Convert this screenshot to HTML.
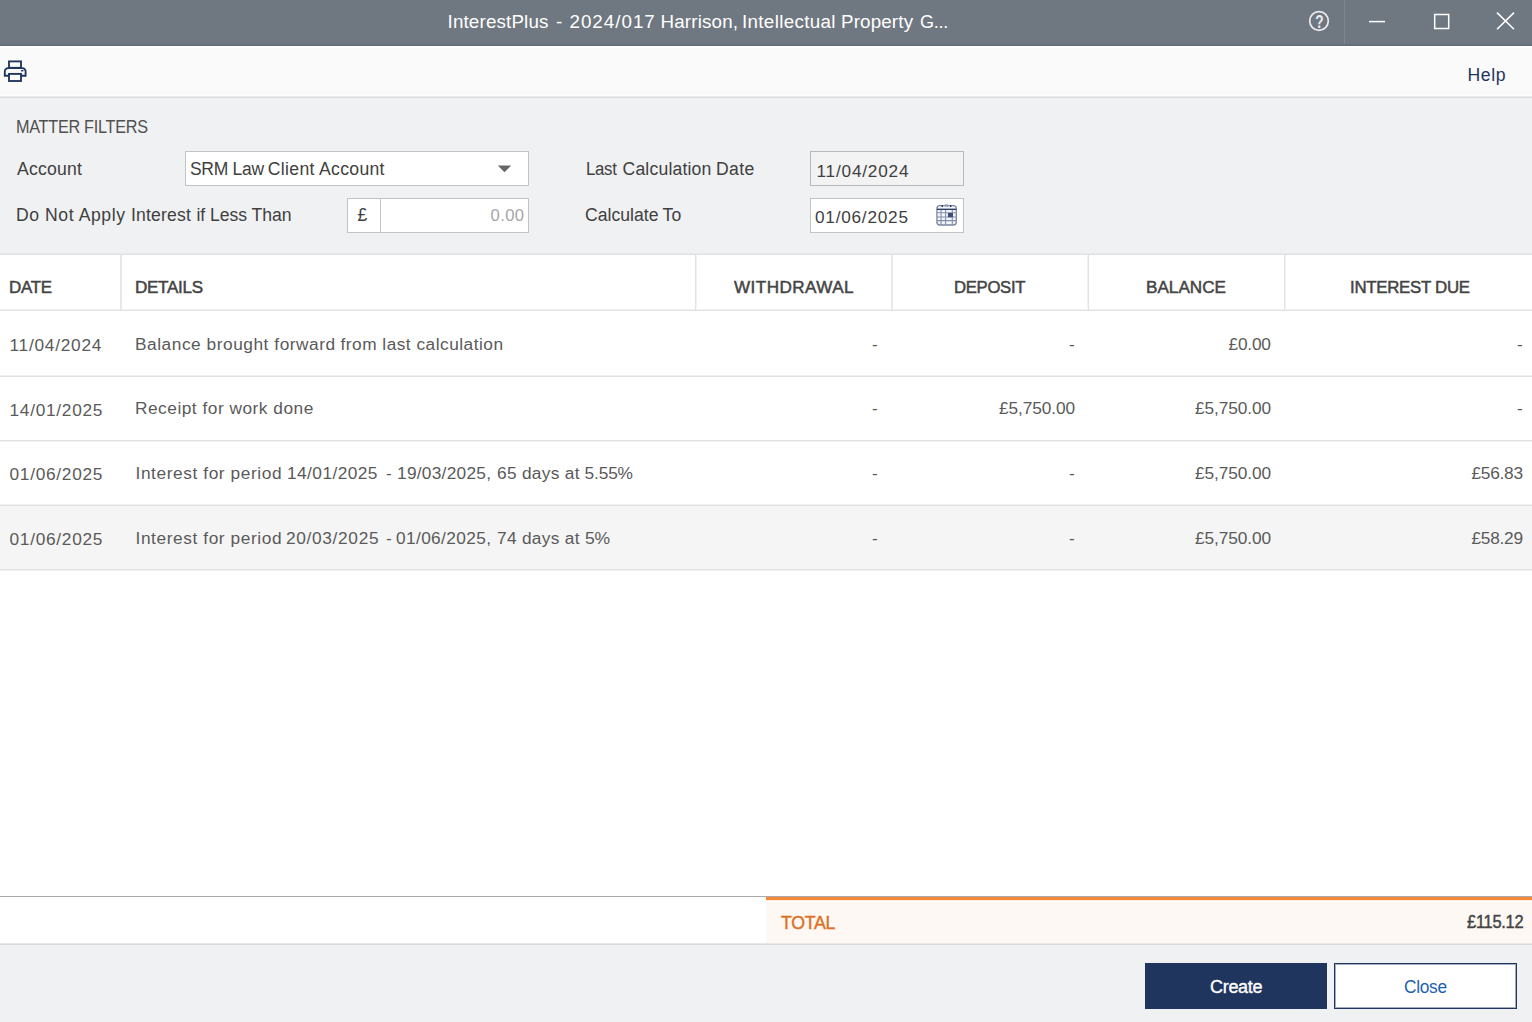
<!DOCTYPE html>
<html><head><meta charset="utf-8"><title>InterestPlus</title>
<style>
*{box-sizing:border-box}
html,body{margin:0;padding:0}
body{width:1532px;height:1022px;position:relative;overflow:hidden;background:#fff;font-family:"Liberation Sans",sans-serif}
.t{position:absolute;white-space:pre}
.a{position:absolute}
#titlebar{left:0;top:0;width:1532px;height:46px;background:#6f7781;border-bottom:2px solid #666e79}
#toolbar{left:0;top:48px;width:1532px;height:47px;background:#fafafa}
#tb1{left:0;top:95px;width:1532px;height:1px;background:#fdfdfd}
#tb2{left:0;top:96px;width:1532px;height:1px;background:#ececec}
#tb3{left:0;top:97px;width:1532px;height:1px;background:#dadada}
#filters{left:0;top:98px;width:1532px;height:155px;background:#f0f1f3}
.box{background:#fff;border:1px solid #c4c4c4}
.hd{left:0;width:1532px;height:1px;background:#e2e2e2}
.hlt{left:0;width:1532px;height:1px;background:#f1f1f1}
.vd{top:255px;width:1px;height:55px;background:#e2e2e2}
.vl{top:255px;width:1px;height:55px;background:#f2f2f2}
.vm{top:255px;width:2px;height:55px;background:#e8e8e8}
#alt{left:0;top:506px;width:1532px;height:63px;background:#f5f5f5}
#footline{left:0;top:896px;width:1532px;height:1px;background:#a9a9a9}
#orange{left:766px;top:897px;width:766px;height:3px;background:#f4893a}
#o2{left:766px;top:900px;width:766px;height:1px;background:#fde9d9}
#total{left:766px;top:902px;width:766px;height:41px;background:#fdf8f3}
#bl1{left:0;top:943px;width:1532px;height:1px;background:#e8e8e8}
#bl2{left:0;top:944px;width:1532px;height:1px;background:#dadada}
#bottom{left:0;top:945px;width:1532px;height:77px;background:#f0f1f3}
button{margin:0;padding:0;border:0;font:inherit;text-align:left;display:block;cursor:default}
#create{left:1145px;top:963px;width:182px;height:46px;background:#1f355e}
#closeb{left:1334px;top:963px;width:183px;height:46px;background:#fff;border:1px solid #1f355e;box-shadow:inset 0 0 0 1px #a3adc1}

</style></head>
<body>
<div class="a" id="titlebar"></div>
<div class="a" id="toolbar"></div><div class="a" id="tb1"></div><div class="a" id="tb2"></div><div class="a" id="tb3"></div>
<div class="a" id="filters"></div>
<div class="a box" style="left:185px;top:151px;width:344px;height:35px"></div>
<div class="a box" style="left:347px;top:198px;width:182px;height:35px"></div>
<div class="a" style="left:380px;top:198px;width:1px;height:35px;background:#c4c4c4"></div>
<div class="a box" style="left:810px;top:151px;width:154px;height:35px;background:#f3f3f3;border-color:#b9b9b9"></div>
<div class="a box" style="left:810px;top:198px;width:154px;height:35px"></div>
<div class="a hlt" style="top:253px;background:#e9e9e9"></div>
<div class="a hd" style="top:254px"></div>
<div class="a hlt" style="top:309px"></div>
<div class="a hd" style="top:310px"></div>
<div class="a vm" style="left:120px"></div>
<div class="a vd" style="left:695px"></div><div class="a vl" style="left:696px"></div>
<div class="a vm" style="left:891px"></div>
<div class="a vl" style="left:1087px"></div><div class="a vd" style="left:1088px"></div>
<div class="a vd" style="left:1284px"></div><div class="a vl" style="left:1285px"></div>
<div class="a" id="alt"></div>
<div class="a hlt" style="top:375px"></div><div class="a hd" style="top:376px"></div>
<div class="a hd" style="top:440px"></div><div class="a hlt" style="top:441px"></div>
<div class="a hlt" style="top:504px"></div><div class="a hd" style="top:505px"></div>
<div class="a hd" style="top:569px"></div><div class="a hlt" style="top:570px"></div>
<div class="a" id="footline"></div>
<div class="a" id="orange"></div><div class="a" id="o2"></div>
<div class="a" id="total"></div>
<div class="a" id="bl1"></div><div class="a" id="bl2"></div>
<div class="a" id="bottom"></div>
<svg class="a" style="left:0;top:0" width="1532" height="260" viewBox="0 0 1532 260" fill="none">
<!-- printer -->
<g stroke="#1f355e" stroke-width="1.85" stroke-linejoin="miter">
<rect x="9" y="61.4" width="12" height="6.4"/>
<path d="M9 75.7H4.8V71.3a3.2 3.2 0 0 1 3.2-3.2H22.4a3.2 3.2 0 0 1 3.2 3.2V75.7H21"/>
<rect x="9" y="73.9" width="12" height="7.1"/>
</g>
<rect x="21" y="70" width="2.4" height="1.4" fill="#1f355e"/>
<!-- help -->
<circle cx="1319" cy="21" r="9.3" stroke="#ececee" stroke-width="1.7"/>
<text transform="translate(1319.3 27.8) scale(0.76 1)" text-anchor="middle" font-family="Liberation Sans, sans-serif" font-weight="700" font-size="18" fill="#ececee">?</text>
<rect x="1344" y="0" width="1" height="44" fill="#7f8690"/>
<g stroke="#fff" stroke-width="1.5">
<path d="M1369 21.6H1385"/>
<rect x="1434.7" y="14.5" width="14" height="14"/>
<path d="M1497 12.6L1514 29.2M1514 12.6L1497 29.2"/>
</g>
<!-- dropdown arrow -->
<path d="M497.8 165.6H511.2L504.5 172.2Z" fill="#666"/>
<!-- calendar -->
<g>
<rect x="936.9" y="205.6" width="19.4" height="19.4" rx="3" stroke="#7a86a0" stroke-width="1.3" fill="#f3f5f9"/>
<path d="M941 209.5V225M945.6 209.5V225M952.3 209.5V225M937 212.8H956M937 217H956M937 220.6H956" stroke="#8490aa" stroke-width="1.1"/>
<path d="M937 209.3H956.3" stroke="#1f355e" stroke-width="1.3"/>
<rect x="948" y="213" width="5" height="4.2" fill="#3b4d75"/>
<path d="M942.3 205.2V207M950.7 205.2V207" stroke="#1f355e" stroke-width="1.4"/>
<rect x="944.8" y="204.4" width="3.4" height="2.2" fill="#8d98b0"/>
</g>
</svg>
<header role="banner">
<span class="t" style="left:447.50px;top:13px;font-size:18.8px;line-height:18.8px;color:#fff;letter-spacing:0.16px;">InterestPlus </span>
<span class="t" style="left:556.00px;top:13px;font-size:18.8px;line-height:18.8px;color:#fff;">- </span>
<span class="t" style="left:569.50px;top:13px;font-size:18.8px;line-height:18.8px;color:#fff;letter-spacing:0.99px;">2024/017 </span>
<span class="t" style="left:660.50px;top:13px;font-size:18.8px;line-height:18.8px;color:#fff;letter-spacing:0.17px;">Harrison, </span>
<span class="t" style="left:742.00px;top:13px;font-size:18.8px;line-height:18.8px;color:#fff;letter-spacing:0.33px;">Intellectual </span>
<span class="t" style="left:841.00px;top:13px;font-size:18.8px;line-height:18.8px;color:#fff;letter-spacing:0.15px;">Property </span>
<span class="t" style="left:920.00px;top:13px;font-size:18.8px;line-height:18.8px;color:#fff;letter-spacing:-0.30px;transform:scaleX(0.9592);transform-origin:0 0;">G...</span>
</header>
<nav>
<span class="t" style="left:1467.50px;top:67px;font-size:17.6px;line-height:17.6px;color:#1f355e;letter-spacing:0.60px;">Help</span>
</nav>
<section aria-label="Matter Filters">
<span class="t" style="left:16.00px;top:119px;font-size:17.6px;line-height:17.6px;color:#505050;letter-spacing:-0.30px;transform:scaleX(0.9228);transform-origin:0 0;">MATTER FILTERS</span>
<span class="t" style="left:17.00px;top:161px;font-size:17.6px;line-height:17.6px;color:#404040;letter-spacing:0.24px;">Account</span>
<span class="t" style="left:16.00px;top:207px;font-size:17.6px;line-height:17.6px;color:#404040;letter-spacing:0.57px;">Do Not Apply </span>
<span class="t" style="left:131.00px;top:207px;font-size:17.6px;line-height:17.6px;color:#404040;letter-spacing:0.17px;">Interest </span>
<span class="t" style="left:196.50px;top:207px;font-size:17.6px;line-height:17.6px;color:#404040;letter-spacing:-0.05px;">if Less Than</span>
<span class="t" style="left:189.50px;top:161px;font-size:17.6px;line-height:17.6px;color:#404040;letter-spacing:-0.30px;transform:scaleX(0.9939);transform-origin:0 0;">SRM Law </span>
<span class="t" style="left:267.75px;top:161px;font-size:17.6px;line-height:17.6px;color:#404040;letter-spacing:0.33px;">Client Account</span>
<span class="t" style="left:585.50px;top:161px;font-size:17.6px;line-height:17.6px;color:#404040;letter-spacing:-0.30px;transform:scaleX(0.9525);transform-origin:0 0;">Last </span>
<span class="t" style="left:622.50px;top:161px;font-size:17.6px;line-height:17.6px;color:#404040;letter-spacing:0.18px;">Calculation </span>
<span class="t" style="left:716.00px;top:161px;font-size:17.6px;line-height:17.6px;color:#404040;letter-spacing:0.34px;">Date</span>
<span class="t" style="left:585.00px;top:207px;font-size:17.6px;line-height:17.6px;color:#404040;letter-spacing:0.01px;">Calculate </span>
<span class="t" style="left:662.50px;top:207px;font-size:17.6px;line-height:17.6px;color:#404040;letter-spacing:0.21px;">To</span>
<span class="t" style="left:816.50px;top:163px;font-size:17.2px;line-height:17.2px;color:#404040;letter-spacing:0.81px;">11/04/2024</span>
<span class="t" style="left:815.00px;top:209px;font-size:17.2px;line-height:17.2px;color:#404040;letter-spacing:0.77px;">01/06/2025</span>
<span class="t" style="left:357.50px;top:207px;font-size:17.6px;line-height:17.6px;color:#404040;">£</span>
<span class="t" style="left:490.50px;top:208px;font-size:16.6px;line-height:16.6px;color:#a6a6a6;letter-spacing:0.40px;">0.00</span>
</section>
<div role="row">
<span class="t" style="left:9.00px;top:279px;font-size:17.1px;line-height:17.1px;color:#444;-webkit-text-stroke:0.5px #444;letter-spacing:-0.30px;transform:scaleX(0.9907);transform-origin:0 0;">DATE</span>
<span class="t" style="left:135.00px;top:279px;font-size:17.1px;line-height:17.1px;color:#444;-webkit-text-stroke:0.5px #444;letter-spacing:-0.30px;transform:scaleX(0.9975);transform-origin:0 0;">DETAILS</span>
<span class="t" style="left:734.00px;top:279px;font-size:17.1px;line-height:17.1px;color:#444;-webkit-text-stroke:0.5px #444;letter-spacing:0.44px;">WITHDRAWAL</span>
<span class="t" style="left:954.00px;top:279px;font-size:17.1px;line-height:17.1px;color:#444;-webkit-text-stroke:0.5px #444;letter-spacing:-0.30px;transform:scaleX(0.9763);transform-origin:0 0;">DEPOSIT</span>
<span class="t" style="left:1146.00px;top:279px;font-size:17.1px;line-height:17.1px;color:#444;-webkit-text-stroke:0.5px #444;letter-spacing:0.03px;">BALANCE</span>
<span class="t" style="left:1350.00px;top:279px;font-size:17.1px;line-height:17.1px;color:#444;-webkit-text-stroke:0.5px #444;letter-spacing:-0.30px;transform:scaleX(0.9856);transform-origin:0 0;">INTEREST DUE</span>
</div>
<div role="row">
<span class="t" style="left:9.50px;top:337px;font-size:17.3px;line-height:17.3px;color:#5a5a5a;letter-spacing:0.75px;">11/04/2024</span>
<span class="t" style="left:135.00px;top:336px;font-size:17.3px;line-height:17.3px;color:#5a5a5a;letter-spacing:0.54px;">Balance brought forward </span>
<span class="t" style="left:340.50px;top:336px;font-size:17.3px;line-height:17.3px;color:#5a5a5a;letter-spacing:0.49px;">from last calculation</span>
<span class="t" style="left:872.00px;top:336px;font-size:17.3px;line-height:17.3px;color:#5a5a5a;">-</span>
<span class="t" style="left:1069.00px;top:336px;font-size:17.3px;line-height:17.3px;color:#5a5a5a;">-</span>
<span class="t" style="left:1228.50px;top:336px;font-size:17.3px;line-height:17.3px;color:#5a5a5a;letter-spacing:-0.19px;">£0.00</span>
<span class="t" style="left:1517.00px;top:336px;font-size:17.3px;line-height:17.3px;color:#5a5a5a;">-</span>
</div>
<div role="row">
<span class="t" style="left:9.50px;top:402px;font-size:17.3px;line-height:17.3px;color:#5a5a5a;letter-spacing:0.72px;">14/01/2025</span>
<span class="t" style="left:135.00px;top:400px;font-size:17.3px;line-height:17.3px;color:#5a5a5a;letter-spacing:0.51px;">Receipt for work done</span>
<span class="t" style="left:872.00px;top:400px;font-size:17.3px;line-height:17.3px;color:#5a5a5a;">-</span>
<span class="t" style="left:999.00px;top:400px;font-size:17.3px;line-height:17.3px;color:#5a5a5a;letter-spacing:-0.11px;">£5,750.00</span>
<span class="t" style="left:1195.00px;top:400px;font-size:17.3px;line-height:17.3px;color:#5a5a5a;letter-spacing:-0.11px;">£5,750.00</span>
<span class="t" style="left:1517.00px;top:400px;font-size:17.3px;line-height:17.3px;color:#5a5a5a;">-</span>
</div>
<div role="row">
<span class="t" style="left:9.50px;top:466px;font-size:17.3px;line-height:17.3px;color:#5a5a5a;letter-spacing:0.72px;">01/06/2025</span>
<span class="t" style="left:135.50px;top:465px;font-size:17.3px;line-height:17.3px;color:#5a5a5a;letter-spacing:0.59px;">Interest for period </span>
<span class="t" style="left:287.00px;top:465px;font-size:17.3px;line-height:17.3px;color:#5a5a5a;letter-spacing:0.44px;">14/01/2025 </span>
<span class="t" style="left:386.00px;top:465px;font-size:17.3px;line-height:17.3px;color:#5a5a5a;">- </span>
<span class="t" style="left:397.00px;top:465px;font-size:17.3px;line-height:17.3px;color:#5a5a5a;letter-spacing:0.27px;">19/03/2025, </span>
<span class="t" style="left:497.00px;top:465px;font-size:17.3px;line-height:17.3px;color:#5a5a5a;letter-spacing:0.31px;">65 days at </span>
<span class="t" style="left:584.50px;top:465px;font-size:17.3px;line-height:17.3px;color:#5a5a5a;letter-spacing:-0.13px;">5.55%</span>
<span class="t" style="left:872.00px;top:465px;font-size:17.3px;line-height:17.3px;color:#5a5a5a;">-</span>
<span class="t" style="left:1069.00px;top:465px;font-size:17.3px;line-height:17.3px;color:#5a5a5a;">-</span>
<span class="t" style="left:1195.00px;top:465px;font-size:17.3px;line-height:17.3px;color:#5a5a5a;letter-spacing:-0.11px;">£5,750.00</span>
<span class="t" style="left:1471.50px;top:465px;font-size:17.3px;line-height:17.3px;color:#5a5a5a;letter-spacing:-0.27px;">£56.83</span>
</div>
<div role="row">
<span class="t" style="left:9.50px;top:531px;font-size:17.3px;line-height:17.3px;color:#5a5a5a;letter-spacing:0.72px;">01/06/2025</span>
<span class="t" style="left:135.50px;top:530px;font-size:17.3px;line-height:17.3px;color:#5a5a5a;letter-spacing:0.59px;">Interest for period </span>
<span class="t" style="left:286.00px;top:530px;font-size:17.3px;line-height:17.3px;color:#5a5a5a;letter-spacing:0.67px;">20/03/2025 </span>
<span class="t" style="left:386.00px;top:530px;font-size:17.3px;line-height:17.3px;color:#5a5a5a;">- </span>
<span class="t" style="left:396.00px;top:530px;font-size:17.3px;line-height:17.3px;color:#5a5a5a;letter-spacing:0.37px;">01/06/2025, </span>
<span class="t" style="left:497.00px;top:530px;font-size:17.3px;line-height:17.3px;color:#5a5a5a;letter-spacing:0.31px;">74 days at </span>
<span class="t" style="left:584.50px;top:530px;font-size:17.3px;line-height:17.3px;color:#5a5a5a;letter-spacing:-0.30px;transform:scaleX(1.0145);transform-origin:0 0;">5%</span>
<span class="t" style="left:872.00px;top:530px;font-size:17.3px;line-height:17.3px;color:#5a5a5a;">-</span>
<span class="t" style="left:1069.00px;top:530px;font-size:17.3px;line-height:17.3px;color:#5a5a5a;">-</span>
<span class="t" style="left:1195.00px;top:530px;font-size:17.3px;line-height:17.3px;color:#5a5a5a;letter-spacing:-0.11px;">£5,750.00</span>
<span class="t" style="left:1471.50px;top:530px;font-size:17.3px;line-height:17.3px;color:#5a5a5a;letter-spacing:-0.27px;">£58.29</span>
</div>
<footer>
<span class="t" style="left:781.00px;top:914px;font-size:18px;line-height:18px;color:#df6f20;-webkit-text-stroke:0.4px #df6f20;letter-spacing:-0.30px;transform:scaleX(0.9882);transform-origin:0 0;">TOTAL</span>
<span class="t" style="left:1467.00px;top:913px;font-size:18px;line-height:18px;color:#444;-webkit-text-stroke:0.45px #444;letter-spacing:-0.30px;transform:scaleX(0.9141);transform-origin:0 0;">£115.12</span>
</footer>
<button type="button" class="a" id="create">
<span class="t" style="left:65.00px;top:15px;font-size:18px;line-height:18px;color:#fff;-webkit-text-stroke:0.35px #fff;letter-spacing:-0.30px;">Create</span>
</button>
<button type="button" class="a" id="closeb">
<span class="t" style="left:68.50px;top:14px;font-size:18px;line-height:18px;color:#1c5fae;letter-spacing:-0.30px;transform:scaleX(0.9608);transform-origin:0 0;">Close</span>
</button>
</body></html>
